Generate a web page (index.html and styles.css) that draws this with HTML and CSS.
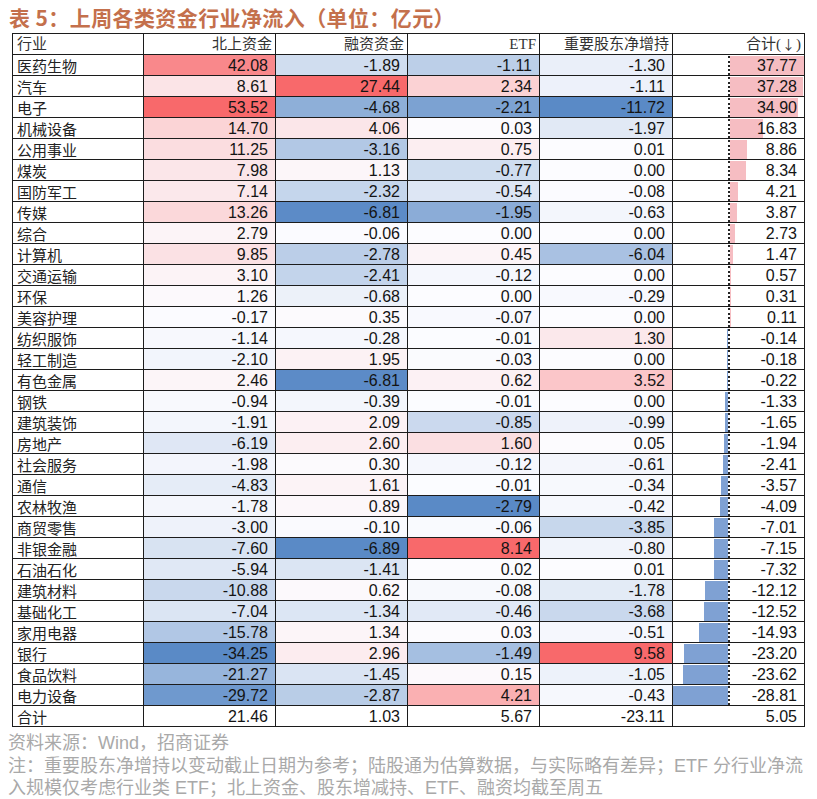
FILE: index.html
```html
<!DOCTYPE html>
<html lang="zh-CN">
<head>
<meta charset="utf-8">
<title>上周各类资金行业净流入</title>
<link rel="stylesheet" href="styles.css">
<script src="script.js" defer></script>
</head>
<body>
<h1 class="title">表 5：上周各类资金行业净流入（单位：亿元）</h1>
<table class="flow">
  <colgroup>
    <col class="c-ind"><col class="c-num"><col class="c-num"><col class="c-num"><col class="c-num5"><col class="c-num">
  </colgroup>
  <thead>
    <tr><th class="ind-h">行业</th><th>北上资金</th><th>融资资金</th><th>ETF</th><th>重要股东净增持</th><th>合计(<span class="arrow">↓</span>)</th></tr>
  </thead>
  <tbody>
    <tr><th class="ind">医药生物</th><td>42.08</td><td>-1.89</td><td>-1.11</td><td>-1.30</td><td class="total">37.77</td></tr>
    <tr><th class="ind">汽车</th><td>8.61</td><td>27.44</td><td>2.34</td><td>-1.11</td><td class="total">37.28</td></tr>
    <tr><th class="ind">电子</th><td>53.52</td><td>-4.68</td><td>-2.21</td><td>-11.72</td><td class="total">34.90</td></tr>
    <tr><th class="ind">机械设备</th><td>14.70</td><td>4.06</td><td>0.03</td><td>-1.97</td><td class="total">16.83</td></tr>
    <tr><th class="ind">公用事业</th><td>11.25</td><td>-3.16</td><td>0.75</td><td>0.01</td><td class="total">8.86</td></tr>
    <tr><th class="ind">煤炭</th><td>7.98</td><td>1.13</td><td>-0.77</td><td>0.00</td><td class="total">8.34</td></tr>
    <tr><th class="ind">国防军工</th><td>7.14</td><td>-2.32</td><td>-0.54</td><td>-0.08</td><td class="total">4.21</td></tr>
    <tr><th class="ind">传媒</th><td>13.26</td><td>-6.81</td><td>-1.95</td><td>-0.63</td><td class="total">3.87</td></tr>
    <tr><th class="ind">综合</th><td>2.79</td><td>-0.06</td><td>0.00</td><td>0.00</td><td class="total">2.73</td></tr>
    <tr><th class="ind">计算机</th><td>9.85</td><td>-2.78</td><td>0.45</td><td>-6.04</td><td class="total">1.47</td></tr>
    <tr><th class="ind">交通运输</th><td>3.10</td><td>-2.41</td><td>-0.12</td><td>0.00</td><td class="total">0.57</td></tr>
    <tr><th class="ind">环保</th><td>1.26</td><td>-0.68</td><td>0.00</td><td>-0.29</td><td class="total">0.31</td></tr>
    <tr><th class="ind">美容护理</th><td>-0.17</td><td>0.35</td><td>-0.07</td><td>0.00</td><td class="total">0.11</td></tr>
    <tr><th class="ind">纺织服饰</th><td>-1.14</td><td>-0.28</td><td>-0.01</td><td>1.30</td><td class="total">-0.14</td></tr>
    <tr><th class="ind">轻工制造</th><td>-2.10</td><td>1.95</td><td>-0.03</td><td>0.00</td><td class="total">-0.18</td></tr>
    <tr><th class="ind">有色金属</th><td>2.46</td><td>-6.81</td><td>0.62</td><td>3.52</td><td class="total">-0.22</td></tr>
    <tr><th class="ind">钢铁</th><td>-0.94</td><td>-0.39</td><td>-0.01</td><td>0.00</td><td class="total">-1.33</td></tr>
    <tr><th class="ind">建筑装饰</th><td>-1.91</td><td>2.09</td><td>-0.85</td><td>-0.99</td><td class="total">-1.65</td></tr>
    <tr><th class="ind">房地产</th><td>-6.19</td><td>2.60</td><td>1.60</td><td>0.05</td><td class="total">-1.94</td></tr>
    <tr><th class="ind">社会服务</th><td>-1.98</td><td>0.30</td><td>-0.12</td><td>-0.61</td><td class="total">-2.41</td></tr>
    <tr><th class="ind">通信</th><td>-4.83</td><td>1.61</td><td>-0.01</td><td>-0.34</td><td class="total">-3.57</td></tr>
    <tr><th class="ind">农林牧渔</th><td>-1.78</td><td>0.89</td><td>-2.79</td><td>-0.42</td><td class="total">-4.09</td></tr>
    <tr><th class="ind">商贸零售</th><td>-3.00</td><td>-0.10</td><td>-0.06</td><td>-3.85</td><td class="total">-7.01</td></tr>
    <tr><th class="ind">非银金融</th><td>-7.60</td><td>-6.89</td><td>8.14</td><td>-0.80</td><td class="total">-7.15</td></tr>
    <tr><th class="ind">石油石化</th><td>-5.94</td><td>-1.41</td><td>0.02</td><td>0.01</td><td class="total">-7.32</td></tr>
    <tr><th class="ind">建筑材料</th><td>-10.88</td><td>0.62</td><td>-0.08</td><td>-1.78</td><td class="total">-12.12</td></tr>
    <tr><th class="ind">基础化工</th><td>-7.04</td><td>-1.34</td><td>-0.46</td><td>-3.68</td><td class="total">-12.52</td></tr>
    <tr><th class="ind">家用电器</th><td>-15.78</td><td>1.34</td><td>0.03</td><td>-0.51</td><td class="total">-14.93</td></tr>
    <tr><th class="ind">银行</th><td>-34.25</td><td>2.96</td><td>-1.49</td><td>9.58</td><td class="total">-23.20</td></tr>
    <tr><th class="ind">食品饮料</th><td>-21.27</td><td>-1.45</td><td>0.15</td><td>-1.05</td><td class="total">-23.62</td></tr>
    <tr><th class="ind">电力设备</th><td>-29.72</td><td>-2.87</td><td>4.21</td><td>-0.43</td><td class="total">-28.81</td></tr>
  </tbody>
  <tfoot>
    <tr><th class="ind">合计</th><td>21.46</td><td>1.03</td><td>5.67</td><td>-23.11</td><td>5.05</td></tr>
  </tfoot>
</table>
<div class="notes">
  <p>资料来源：Wind，招商证券</p>
  <p>注：重要股东净增持以变动截止日期为参考；陆股通为估算数据，与实际略有差异；ETF 分行业净流<br>入规模仅考虑行业类 ETF；北上资金、股东增减持、ETF、融资均截至周五</p>
</div>
</body>
</html>
```

FILE: styles.css
```css
* { box-sizing: border-box; }

body {
  margin: 0;
  width: 817px;
  background: #fff;
  color: #111;
  font-family: "Liberation Sans", "Noto Sans CJK SC", sans-serif;
}

.title {
  margin: 0;
  padding: 5px 0 0 9px;
  height: 33px;
  font: bold 21px/25px "Noto Sans CJK SC", sans-serif;
  letter-spacing: 0.4px;
  color: #c4704c;
  white-space: nowrap;
}

.flow {
  --axis: 43.27%;
  margin-left: 12px;
  width: 792px;
  border-collapse: collapse;
  table-layout: fixed;
}

.c-ind { width: 131px; }
.c-num { width: 132px; }
.c-num5 { width: 133px; }

.flow th,
.flow td {
  height: 21px;
  padding: 0 7px 0 4px;
  border: 1px solid #1c1c1c;
  white-space: nowrap;
  overflow: hidden;
}

.flow thead th {
  padding-right: 3px;
  text-align: right;
  font: 15px/19px "Liberation Serif", "Noto Sans CJK SC", serif;
  font-weight: normal;
  color: #333;
}

.flow thead th.ind-h { text-align: left; }

.arrow {
  display: inline-block;
  width: 15px;
  text-align: center;
  font-family: "Noto Sans CJK SC", sans-serif;
  font-size: 13px;
}

.flow .ind {
  text-align: left;
  font: 15px/19px "Noto Sans CJK SC", sans-serif;
  font-weight: normal;
  color: #222;
}

.flow td {
  text-align: right;
  font: 16px/19px "Liberation Sans", sans-serif;
  color: #141414;
}

/* data bars in the total column */
.flow td.total { padding: 0; }

.tcell {
  display: grid;
  height: 19px;
}

.tcell > * { grid-area: 1 / 1; }

.dbar {
  display: grid;
  grid-template-columns: var(--axis) 1fr;
}

.dbar .n {
  display: flex;
  justify-content: flex-end;
  border-right: 2px dotted #222;
}

.dbar .p { display: flex; }

.dbar i {
  display: block;
  height: 100%;
}

.dbar .n i { background: #7fa1d3; }
.dbar .p i { background: #f6bdc2; }

.tcell .val {
  padding-right: 7px;
  text-align: right;
  line-height: 19px;
}

.notes {
  margin: 5px 0 0 8px;
  font: 18px/22.5px "Liberation Sans", "Noto Sans CJK SC", sans-serif;
  color: #a9a9a9;
  white-space: nowrap;
}

.notes p { margin: 0; }
```

FILE: script.js
```js
(function () {
  var table = document.querySelector('.flow');
  var rows = Array.prototype.slice.call(table.querySelectorAll('tbody tr'));
  var HI = [248, 105, 107], MID = [252, 252, 255], LO = [90, 138, 198];

  function mix(a, b, t) {
    t = Math.max(0, Math.min(1, t));
    return 'rgb(' + a.map(function (v, i) { return Math.round(v + (b[i] - v) * t); }).join(',') + ')';
  }

  function num(td) { return parseFloat(td.textContent); }

  function el(tag, cls) {
    var e = document.createElement(tag);
    if (cls) e.className = cls;
    return e;
  }

  // three-colour scale per column (midpoint 0)
  for (var c = 1; c <= 4; c++) {
    var cells = rows.map(function (r) { return r.cells[c]; });
    var vals = cells.map(num);
    var max = Math.max.apply(null, vals), min = Math.min.apply(null, vals);
    cells.forEach(function (td, i) {
      var v = vals[i];
      td.style.backgroundColor = v >= 0 ? mix(MID, HI, max > 0 ? v / max : 0) : mix(MID, LO, min < 0 ? v / min : 0);
    });
  }

  // data bars in the total column
  var tcells = rows.map(function (r) { return r.cells[5]; });
  var tvals = tcells.map(num);
  var tmax = Math.max(0, Math.max.apply(null, tvals));
  var tmin = Math.min(0, Math.min.apply(null, tvals));
  table.style.setProperty('--axis', (-tmin / (tmax - tmin) * 100).toFixed(2) + '%');

  tcells.forEach(function (td, i) {
    var v = tvals[i];
    var text = td.textContent;
    td.textContent = '';
    var wrap = el('div', 'tcell');
    var bar = el('div', 'dbar');
    var n = el('span', 'n'), p = el('span', 'p');
    var ni = el('i'), pi = el('i');
    if (v < 0) ni.style.width = (v / tmin * 100).toFixed(2) + '%';
    else pi.style.width = (tmax > 0 ? v / tmax * 100 : 0).toFixed(2) + '%';
    n.appendChild(ni);
    p.appendChild(pi);
    bar.appendChild(n);
    bar.appendChild(p);
    var val = el('span', 'val');
    val.textContent = text;
    wrap.appendChild(bar);
    wrap.appendChild(val);
    td.appendChild(wrap);
  });
})();
```
